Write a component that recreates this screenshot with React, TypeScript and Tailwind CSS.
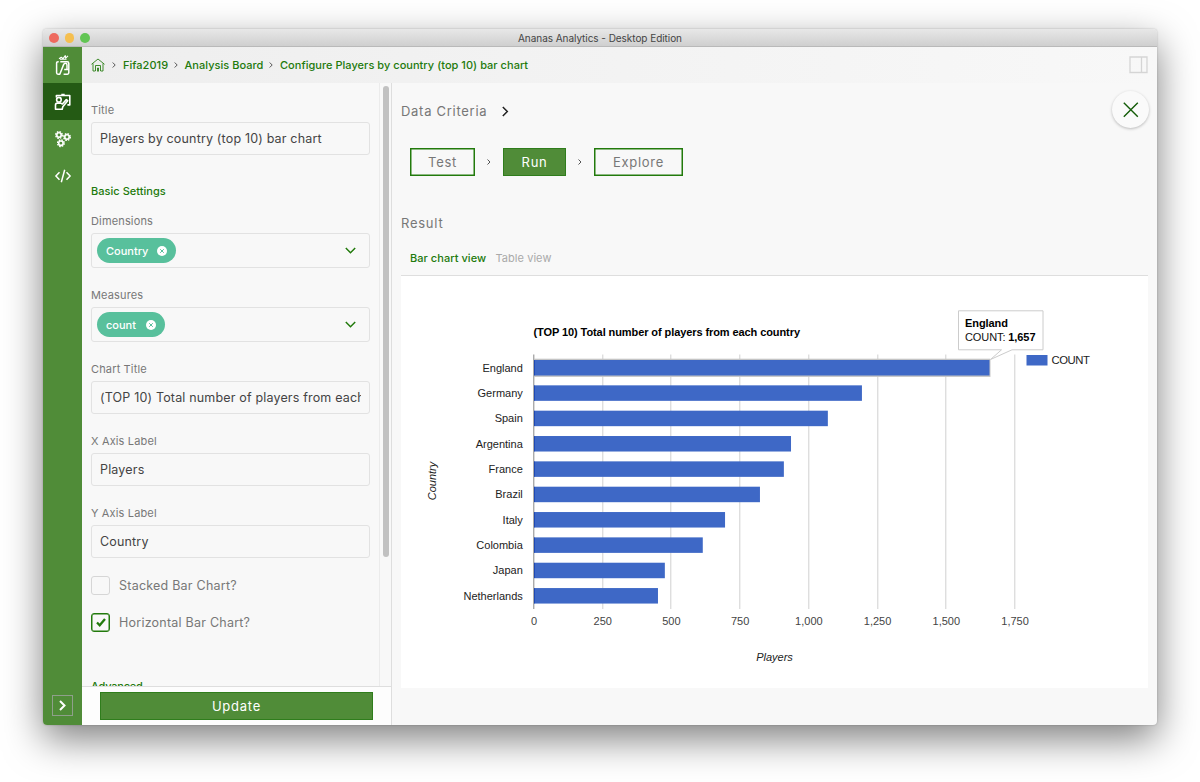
import React from "react";

const sans = "font-['Inter','Liberation_Sans',sans-serif]";

function LogoIcon() {
  return (
    <svg width="16" height="22" viewBox="0 0 16 22" fill="none" stroke="#fff" strokeWidth="1.500" strokeLinejoin="round">
      <path d="M3.700 7.800H3Q1.600 7.800 1.600 9.200V18.800Q1.600 20.200 3 20.200H4.800L8.600 10.600Q9.200 9.300 10.500 9.300Q12 9.300 12 11V15.300" />
      <path d="M5.300 7.800H12.200Q13.800 7.800 13.800 9.400V18.800Q13.800 20.200 12.400 20.200H8.600M9.200 15.500H13.500" />
      <path d="M4 4.800L6.300 3.300l1.700 1.300L10.300 1.600l.4 2.600L13 1.900M5 5.300h6.500" strokeWidth="1.100" />
    </svg>
  );
}

function BoardIcon() {
  return (
    <svg width="18" height="18" viewBox="0 0 18 18" fill="none" stroke="#fff" strokeWidth="1.600" strokeLinejoin="round">
      <path d="M2.400 4.500V2.500h13.400v9.400h-2.400M7.300 1.600h3.400" />
      <circle cx="4.900" cy="6.700" r="2.300" fill="#245a14" />
      <path d="M1.500 16.200V12q0-1.900 1.900-1.900h3.300l1.700.9 3.900-4.400 1.400 1.100-4.900 6-.6 2.500z" />
    </svg>
  );
}

function Gear({ x, y }: { x: number; y: number }) {
  return (
    <g transform={`translate(${x} ${y})`} fill="none" stroke="#fff">
      <circle r="2.200" strokeWidth="1.600" />
      <circle r="3.300" strokeWidth="1.400" strokeDasharray="1.592 1" />
    </g>
  );
}

function GearsIcon() {
  return (
    <svg width="18" height="18" viewBox="0 0 18 18">
      <Gear x={5} y={5} />
      <Gear x={13} y={7} />
      <Gear x={6.9} y={13.2} />
    </svg>
  );
}

function CodeIcon() {
  return (
    <svg width="18" height="14" viewBox="0 0 18 14" fill="none" stroke="#fff" strokeWidth="1.500">
      <path d="M5.500 3.200L1.900 7l3.600 3.800M12.500 3.200L16.100 7l-3.600 3.800M10.700 .8L7.300 13.200" />
    </svg>
  );
}

function Chevron({ className, w, h, d, width = 1.3 }: { className: string; w: number; h: number; d: string; width?: number }) {
  return (
    <svg className={className} width={w} height={h} viewBox={`0 0 ${w} ${h}`} fill="none" stroke="currentColor" strokeWidth={width}>
      <path d={d} />
    </svg>
  );
}

function Label({ children }: { children: React.ReactNode }) {
  return <div className="h-4 pt-px text-[11px] leading-4 tracking-[0.15px] text-[#777]">{children}</div>;
}

function Input({ children }: { children: React.ReactNode }) {
  return (
    <div className="mt-[5px] h-[33px] rounded-[3px] border border-[#e2e2e2] px-2">
      <div className="overflow-hidden whitespace-nowrap text-[12.500px] leading-[32px] tracking-[0.170px] text-[#444]">{children}</div>
    </div>
  );
}

function Select({ value, className }: { value: string; className: string }) {
  return (
    <div className="mt-[5px] flex h-[35px] items-center justify-between rounded-[3px] border border-[#e2e2e2] pl-[5px] pr-[13px]">
      <div className={`flex h-[25px] items-center justify-between rounded-full bg-[#58c09c] pl-[9px] pr-[9px] ${className}`}>
        <span className="text-[11px] font-medium leading-4 tracking-[0px] text-white">{value}</span>
        <svg width="10" height="10" viewBox="0 0 10 10">
          <circle cx="5" cy="5" r="5" fill="#fff" />
          <path d="M3.200 3.200l3.600 3.600M6.800 3.200L3.200 6.800" stroke="#58c09c" strokeWidth="1" />
        </svg>
      </div>
      <Chevron className="text-[#227a0c]" w={11} h={7} d="M.8 1l4.700 4.700L10.200 1" width={1.5} />
    </div>
  );
}

const crumbs = [
  { text: "Fifa2019", w: "w-[43.500px]" },
  { text: "Analysis Board", w: "w-[77.500px]" },
  { text: "Configure Players by country (top 10) bar chart", w: "w-[260px]" },
];

const data: [string, number][] = [
  ["England", 1657],
  ["Germany", 1193],
  ["Spain", 1069],
  ["Argentina", 935],
  ["France", 909],
  ["Brazil", 822],
  ["Italy", 695],
  ["Colombia", 614],
  ["Japan", 476],
  ["Netherlands", 451],
];
const ticks = ["0", "250", "500", "750", "1,000", "1,250", "1,500", "1,750"];

function Chart() {
  const x0 = 133;
  const unit = 68.72;
  return (
    <svg width="747" height="412" viewBox="0 0 747 412" className="bg-white font-['Liberation_Sans',sans-serif]" fontSize="11" fill="#222">
      <text x="132.500" y="59.500" fontSize="11" fontWeight="700" fill="#000" textLength="266.500">(TOP 10) Total number of players from each country</text>
      {ticks.map((t, i) => (
        <g key={t}>
          <rect x={i ? Math.round(x0 + i * unit) - 0.7 : x0 - 0.7} y="78.500" width="1" height="254.500" fill={i ? "#d0d0d0" : "#888"} />
          <text x={x0 + i * unit} y="349" textAnchor="middle" fill="#444">{t}</text>
        </g>
      ))}
      {data.map(([name, v], i) => {
        const cy = 91.7 + i * 25.34;
        const w = (v / 250) * unit;
        return (
          <g key={name}>
            {i === 0 && <rect x={x0} y={cy - 9} width={w + 1} height="18.200" fill="#c4c4c4" />}
            <rect x={x0} y={cy - 7.7} width={w} height="15.500" fill="#3e68c6" />
            <path d={`M${x0 + 0.5} ${cy - 7.500}v15.100`} stroke="#1e49b5" strokeWidth="1" />
            <text x="121.800" y={cy + 4} textAnchor="end">{name}</text>
          </g>
        );
      })}
      <rect x="625.500" y="79" width="21" height="10.500" fill="#3e68c6" />
      <text x="650.500" y="88" fontSize="11.300" textLength="38.500">COUNT</text>
      <text x="373.500" y="385" textAnchor="middle" fontStyle="italic">Players</text>
      <text transform="translate(35 205) rotate(-90)" textAnchor="middle" fontStyle="italic">Country</text>
      <path d="M557.500 34.800h84.500v39h-31L589.500 83.500l11-9.700h-43z" fill="#fff" stroke="#ccc" />
      <text x="564" y="51" fontWeight="700" fill="#000" textLength="43">England</text>
      <text x="564" y="65" fill="#111" textLength="70.500">COUNT: <tspan fontWeight="700" fill="#000">1,657</tspan></text>
    </svg>
  );
}

export default function App() {
  return (
    <div className={`h-[782px] w-[1200px] overflow-hidden bg-white pl-[43px] pt-[29px] ${sans}`}>
      <div className="flex h-[696px] w-[1114px] flex-col overflow-hidden rounded-[4px] bg-[#f8f8f8] shadow-[0_14px_38px_rgba(0,0,0,0.5),0_0_2px_rgba(0,0,0,0.25)]">
        <div className="relative flex h-[18px] shrink-0 items-center justify-center border-b border-[#b9b9b9] bg-linear-to-b from-[#e8e8e8] to-[#cfcfcf]">
          <div className="absolute left-[6px] top-[4px] flex gap-[6px]">
            <i className="size-[9.500px] rounded-full bg-[#ee6a5f]" />
            <i className="size-[9.500px] rounded-full bg-[#f5bf4f]" />
            <i className="size-[9.500px] rounded-full bg-[#62c554]" />
          </div>
          <span className="pt-[1px] text-[10px] leading-none tracking-[-0.05px] text-[#444]">Ananas Analytics - Desktop Edition</span>
        </div>
        <div className="flex min-h-0 flex-1">
          <nav className="flex w-[39px] shrink-0 flex-col items-center bg-[#508c38]">
            <div className="flex h-[36px] w-full items-center justify-center"><LogoIcon /></div>
            <div className="flex h-[37px] w-full items-center justify-center bg-[#245a14]"><BoardIcon /></div>
            <div className="flex h-[37px] w-full items-center justify-center"><GearsIcon /></div>
            <div className="flex h-[37px] w-full items-center justify-center"><CodeIcon /></div>
            <div className="mb-[9px] mt-auto flex h-[21px] w-[21px] items-center justify-center border border-[#8f9f8b]">
              <Chevron className="text-white" w={7} h={11} d="M1 1l4.500 4.500L1 10" width={2} />
            </div>
          </nav>
          <div className="flex min-w-0 flex-1 flex-col">
            <header className="flex h-[36px] shrink-0 items-center bg-linear-to-r from-[#eeeeee] to-[#f8f8f8] pl-[9px] pr-[9px]">
              <svg width="14" height="14" viewBox="0 0 14 14" fill="none" stroke="#227a0c" strokeWidth="1">
                <path d="M.5 6.300L7 1l6.500 5.300M2 5.500v7.500h2.300M12 5.500V13H9.700M4.500 13V7.500h5V13M6.500 13.500v-3.500h1v3.500" strokeOpacity=".85" />
              </svg>
              {crumbs.map((c) => (
                <React.Fragment key={c.text}>
                  <Chevron className="mx-[7px] text-[#555]" w={4} h={6} d="M.7 .5L3.200 3 .7 5.500" width={1} />
                  <span className={`whitespace-nowrap text-[11px] font-medium leading-4 tracking-[0.030px] text-[#227a0c] ${c.w}`}>{c.text}</span>
                </React.Fragment>
              ))}
              <svg className="ml-auto" width="19" height="18" viewBox="0 0 19 18" fill="none" stroke="#d5d5d5" strokeWidth="1.300">
                <path d="M1 1h17v15.500H1zM12.500 1v15.500" />
              </svg>
            </header>
            <div className="flex min-h-0 flex-1">
              <section className="flex w-[310px] shrink-0 flex-col border-r border-[#dedede]">
                <div className="flex min-h-0 flex-1">
                  <div className="w-[298px] shrink-0 overflow-hidden border-r border-[#ebebeb] pl-[9px] pr-[9px] pt-[18px]">
                    <Label>Title</Label>
                    <Input>Players by country (top 10) bar chart</Input>
                    <div className="mb-[13px] mt-[28px] text-[11px] font-medium leading-4 tracking-[0.030px] text-[#227a0c]">Basic Settings</div>
                    <Label>Dimensions</Label>
                    <Select value="Country" className="w-[79px]" />
                    <div className="h-[18px]" />
                    <Label>Measures</Label>
                    <Select value="count" className="w-[68px]" />
                    <div className="h-[18px]" />
                    <Label>Chart Title</Label>
                    <Input>(TOP 10) Total number of players from each country</Input>
                    <div className="h-[18px]" />
                    <Label>X Axis Label</Label>
                    <Input>Players</Input>
                    <div className="h-[18px]" />
                    <Label>Y Axis Label</Label>
                    <Input>Country</Input>
                    <div className="mt-[18px] flex h-[19px] items-center gap-[9px]">
                      <div className="size-[19px] rounded-[3px] border-[1.500px] border-[#d6d6d6]" />
                      <span className="pt-[2px] text-[12.500px] tracking-[0.23px] text-[#777]">Stacked Bar Chart?</span>
                    </div>
                    <div className="mt-[18px] flex h-[19px] items-center gap-[9px]">
                      <div className="flex size-[19px] items-center justify-center rounded-[3px] border border-[#227a0c] shadow-[inset_0_0_0_0.5px_#227a0c]">
                        <svg width="10" height="9" viewBox="0 0 10 9" fill="none" stroke="#227a0c" strokeWidth="2.300"><path d="M1 4.500l2.700 2.700L9 1" /></svg>
                      </div>
                      <span className="pt-[2px] text-[12.500px] tracking-[0.23px] text-[#777]">Horizontal Bar Chart?</span>
                    </div>
                    <div className="mt-[46px] text-[11px] font-medium leading-4 tracking-[-0.2px] text-[#227a0c]">Advanced</div>
                  </div>
                  <div className="flex-1 pl-[3px] pt-[3px]">
                    <div className="h-[471px] w-[6px] rounded-full bg-[#c1c1c1]" />
                  </div>
                </div>
                <div className="h-[39px] shrink-0 border-t border-[#dedede] bg-[#fdfdfd] pl-[18px] pt-[5px]">
                  <div className="flex h-[28px] w-[273px] items-center justify-center border border-[#2f7d1c] bg-[#508c38] pt-px text-[13px] tracking-[0.75px] text-white">Update</div>
                </div>
              </section>
              <main className="relative flex min-w-0 flex-1 flex-col pl-[9px]">
                <div className="mt-[18px] flex h-5 items-center text-[13px] tracking-[0.72px] text-[#777]">
                  <span className="w-[101px] whitespace-nowrap pt-px">Data Criteria</span>
                  <Chevron className="text-[#222]" w={7} h={11} d="M.8 1l4.500 4.500L.8 10" width={1.5} />
                </div>
                <div className="mt-[27px] flex h-[28px] items-center pl-[9px] text-[13px] tracking-[0.7px] text-[#777]">
                  <div className="flex h-full w-[65px] items-center justify-center border border-[#227a0c] pt-px shadow-[inset_0_0_0_0.5px_#227a0c]">Test</div>
                  <Chevron className="mx-[12px] text-[#555]" w={4} h={6} d="M.5 .5L3 3 .5 5.500" width={1} />
                  <div className="flex h-full w-[63px] items-center justify-center border border-[#2f7d1c] bg-[#508c38] pt-px text-white">Run</div>
                  <Chevron className="mx-[12px] text-[#555]" w={4} h={6} d="M.5 .5L3 3 .5 5.500" width={1} />
                  <div className="flex h-full w-[89px] items-center justify-center border border-[#227a0c] pt-px shadow-[inset_0_0_0_0.5px_#227a0c]">Explore</div>
                </div>
                <div className="mt-[37px] h-5 text-[13px] leading-[20px] tracking-[0.75px] text-[#777]">Result</div>
                <div className="mt-[17px] flex h-[26px] w-[747px] items-start border-b border-[#dedede] pl-[9px] text-[11px] leading-4">
                  <span className="w-[85.500px] font-medium tracking-[0.050px] text-[#227a0c]">Bar chart view</span>
                  <span className="tracking-[0.050px] text-[#aaa]">Table view</span>
                </div>
                <Chart />
                <button className="absolute right-[8px] top-[8px] flex size-[37px] items-center justify-center rounded-full bg-[#fafafa] shadow-[0_1px_3px_rgba(0,0,0,0.25)]">
                  <svg width="16" height="16" viewBox="0 0 16 16" stroke="#145c08" strokeWidth="1.400"><path d="M.8 .8l14 14M14.800 .8L.8 14.800" /></svg>
                </button>
              </main>
            </div>
          </div>
        </div>
      </div>
    </div>
  );
}
